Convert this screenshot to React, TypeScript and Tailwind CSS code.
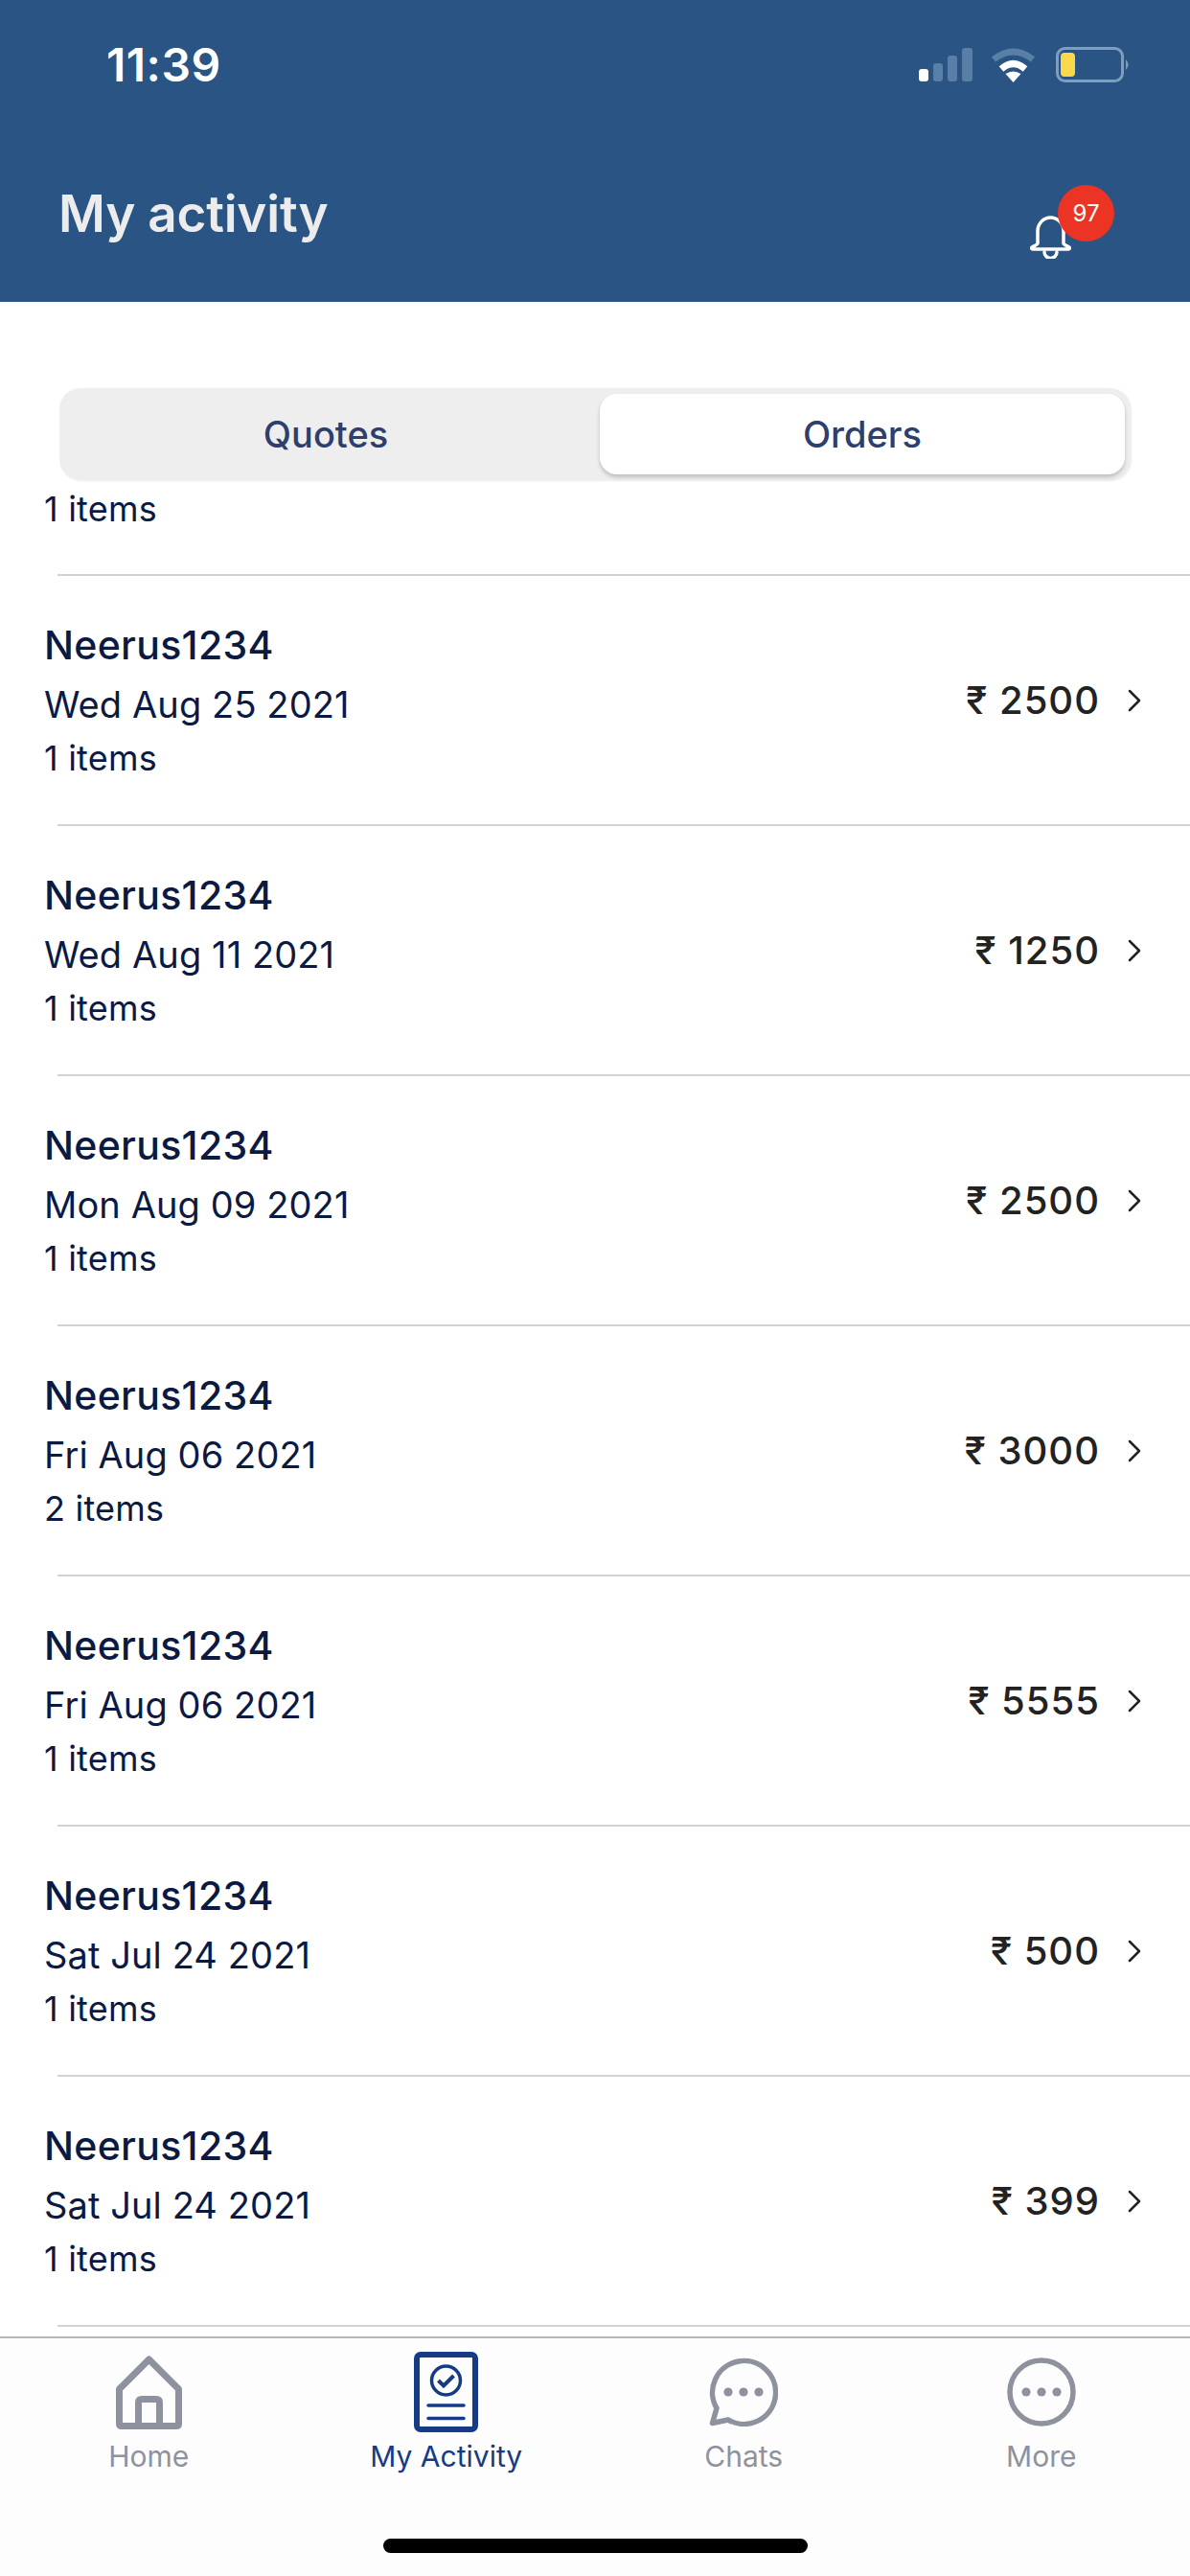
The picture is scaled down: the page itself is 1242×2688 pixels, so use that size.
import { ChevronRight } from 'lucide-react';

const rows = [
  { date: 'Wed Aug 25 2021', count: '1 items', amount: '2500' },
  { date: 'Wed Aug 11 2021', count: '1 items', amount: '1250' },
  { date: 'Mon Aug 09 2021', count: '1 items', amount: '2500' },
  { date: 'Fri Aug 06 2021', count: '2 items', amount: '3000' },
  { date: 'Fri Aug 06 2021', count: '1 items', amount: '5555' },
  { date: 'Sat Jul 24 2021', count: '1 items', amount: '500' },
  { date: 'Sat Jul 24 2021', count: '1 items', amount: '399' },
];

function SignalIcon() {
  return (
    <svg width="56" height="35" viewBox="0 0 56 35">
      <rect x="0" y="22" width="10" height="13" rx="3" fill="#ffffff" />
      <rect x="15" y="16" width="10" height="19" rx="3" fill="#5a7fa6" />
      <rect x="30" y="8" width="10" height="27" rx="3" fill="#5a7fa6" />
      <rect x="45" y="0" width="11" height="35" rx="3" fill="#5a7fa6" />
    </svg>
  );
}

function WifiIcon() {
  return (
    <svg width="47" height="36" viewBox="0 0 47 36">
      <path d="M3 12 Q23.5 -4 44 12" fill="none" stroke="#5a7fa6" strokeWidth="7" />
      <path d="M11 22 Q23.5 11 36 22" fill="none" stroke="#ffffff" strokeWidth="7" />
      <path d="M15.5 27 Q23.5 22 31.5 27 L23.5 36 Z" fill="#ffffff" />
    </svg>
  );
}

function BatteryIcon() {
  return (
    <svg width="78" height="37" viewBox="0 0 78 37">
      <rect x="1.5" y="1.5" width="68" height="34" rx="8" fill="none" stroke="#7f9dbd" strokeWidth="3" />
      <rect x="5" y="6" width="15" height="25" rx="4" fill="#f9d949" />
      <path d="M73 13 Q78 18.5 73 24 Z" fill="#7f9dbd" />
    </svg>
  );
}

function BellIcon() {
  return (
    <svg width="43" height="46" viewBox="0 0 43 46" fill="none" stroke="#ffffff" strokeWidth="3.5" strokeLinecap="round" strokeLinejoin="round">
      <path d="M8 30 V17 A13.5 14 0 0 1 35 17 V30 Q35 31 41 34 Q42 36 40 36 H3 Q1 36 2 34 Q8 31 8 30 Z" />
      <path d="M15 39 A6.5 6.5 0 0 0 28 39" />
    </svg>
  );
}

function HomeIcon() {
  return (
    <svg width="69" height="77" viewBox="0 0 69 77" fill="none" stroke="#8e929f" strokeWidth="7" strokeLinejoin="round">
      <path d="M34.5 4 L65.5 35 V71 Q65.5 73.5 63 73.5 H6 Q3.5 73.5 3.5 71 V35 Z" />
      <path d="M23.5 73 V49 Q23.5 45.5 27 45.5 H42 Q45.5 45.5 45.5 49 V73" />
    </svg>
  );
}

function ActivityIcon() {
  return (
    <svg width="67" height="84" viewBox="0 0 67 84" fill="none" stroke="#153b87">
      <rect x="3" y="3" width="61" height="78" rx="4" strokeWidth="6" />
      <circle cx="33.5" cy="30" r="15" strokeWidth="3.5" />
      <path d="M25.5 30 L31 35.5 L41.5 25" strokeWidth="4" />
      <path d="M15 56 H52 M15 69.5 H52" strokeWidth="3.5" strokeLinecap="round" />
    </svg>
  );
}

function ChatIcon() {
  return (
    <svg width="72" height="72" viewBox="0 0 72 72" fill="none" stroke="#8e929f" strokeWidth="5.5" strokeLinejoin="round">
      <path d="M20 65 A33 33 0 1 0 8 53 L3.5 68.5 Z" />
      <g fill="#8e929f" stroke="none">
        <circle cx="20" cy="36" r="4.6" />
        <circle cx="36" cy="36" r="4.6" />
        <circle cx="52" cy="36" r="4.6" />
      </g>
    </svg>
  );
}

function MoreIcon() {
  return (
    <svg width="72" height="72" viewBox="0 0 72 72" fill="none" stroke="#8e929f" strokeWidth="5.5">
      <circle cx="36" cy="36" r="33" />
      <g fill="#8e929f" stroke="none">
        <circle cx="20" cy="36" r="4.6" />
        <circle cx="36" cy="36" r="4.6" />
        <circle cx="52" cy="36" r="4.6" />
      </g>
    </svg>
  );
}

function OrderRow({ date, count, amount }: { date: string; count: string; amount: string }) {
  return (
    <div>
      <div className="h-[259px] flex items-center justify-between pl-[46px] pr-[38px]">
        <div className="flex flex-col text-[#0b1a42]">
          <span className="text-[41px] leading-[56px] mb-[4px] font-medium tracking-[0.3px]">Neerus1234</span>
          <span className="text-[38px] leading-[60px] tracking-[0.1px]">{date}</span>
          <span className="text-[36px] leading-[52px] tracking-[0.2px]">{count}</span>
        </div>
        <div className="flex items-center text-[#222222]">
          <span className="text-[40px] font-medium tracking-[1px]">₹ {amount}</span>
          <ChevronRight className="ml-[16px] w-[40px] h-[40px]" strokeWidth={1.5} />
        </div>
      </div>
      <div className="ml-[60px] h-[2px] bg-[#d2d2d2]" />
    </div>
  );
}

function TabItem({ icon, label, active }: { icon: React.ReactNode; label: string; active?: boolean }) {
  return (
    <div className="flex flex-col items-center">
      <div className="h-[84px] flex items-center">{icon}</div>
      <span className={active ? 'mt-[5px] text-[30px] leading-[40px] text-[#153b87]' : 'mt-[5px] text-[30px] leading-[40px] text-[#8e929f]'}>
        {label}
      </span>
    </div>
  );
}

export default function App() {
  return (
    <div className="w-[1242px] h-[2688px] flex flex-col overflow-hidden bg-white font-[Inter,sans-serif]">
      {/* Header */}
      <div className="h-[315px] shrink-0 bg-[#295483] flex flex-col">
        <div className="flex items-center justify-between pt-[49px] pl-[111px] pr-[62px] h-[86px]">
          <span className="text-[48px] leading-[37px] font-semibold tracking-[0.5px] text-white">11:39</span>
          <div className="flex items-center">
            <SignalIcon />
            <div className="ml-[19px]"><WifiIcon /></div>
            <div className="ml-[21px]"><BatteryIcon /></div>
          </div>
        </div>
        <div className="flex items-center justify-between mt-[89px] pl-[61px] pr-[79px]">
          <span className="text-[53px] leading-[64px] font-semibold tracking-[-0.2px] text-[#ececec]">My activity</span>
          <div className="relative mt-[49px] mr-[45px]">
            <BellIcon />
            <div className="absolute -top-[31px] -right-[45px] w-[59px] h-[59px] rounded-full bg-[#ec3424] flex items-center justify-center text-white text-[24px]">
              97
            </div>
          </div>
        </div>
      </div>

      {/* Orders */}
      <div className="flex-1 min-h-0 overflow-hidden">
        <div className="mt-[90px] ml-[62px] w-[1118px] h-[96px] rounded-[22px] bg-[#eeeeee] flex shadow-[1px_1px_2px_rgba(0,0,0,0.08)] pr-[6px]">
          <div className="flex-1 pr-[8px] flex items-center justify-center text-[38px] font-medium text-[#2c3f6d]">Quotes</div>
          <div className="w-[548px] my-[6px] rounded-[18px] bg-white shadow-[0_3px_4px_rgba(0,0,0,0.2)] flex items-center justify-center text-[38px] font-medium text-[#2c3f6d]">Orders</div>
        </div>
        <div className="h-[98px] pt-[4px] pl-[46px] text-[36px] leading-[52px] tracking-[0.2px] text-[#0b1a42]">1 items</div>
        <div className="ml-[60px] h-[2px] bg-[#d2d2d2]" />
        {rows.map((row, i) => (
          <OrderRow key={i} date={row.date} count={row.count} amount={row.amount} />
        ))}
      </div>

      {/* Tab bar */}
      <div className="h-[250px] shrink-0 border-t-2 border-[#b7b7b7] bg-[#fdfdfd] flex flex-col">
        <div className="grid grid-cols-4 pt-[14px]">
          <TabItem icon={<HomeIcon />} label="Home" />
          <TabItem icon={<ActivityIcon />} label="My Activity" active />
          <TabItem icon={<ChatIcon />} label="Chats" />
          <TabItem icon={<MoreIcon />} label="More" />
        </div>
        <div className="mt-auto mb-[24px] mx-auto w-[443px] h-[15px] rounded-full bg-black" />
      </div>
    </div>
  );
}
